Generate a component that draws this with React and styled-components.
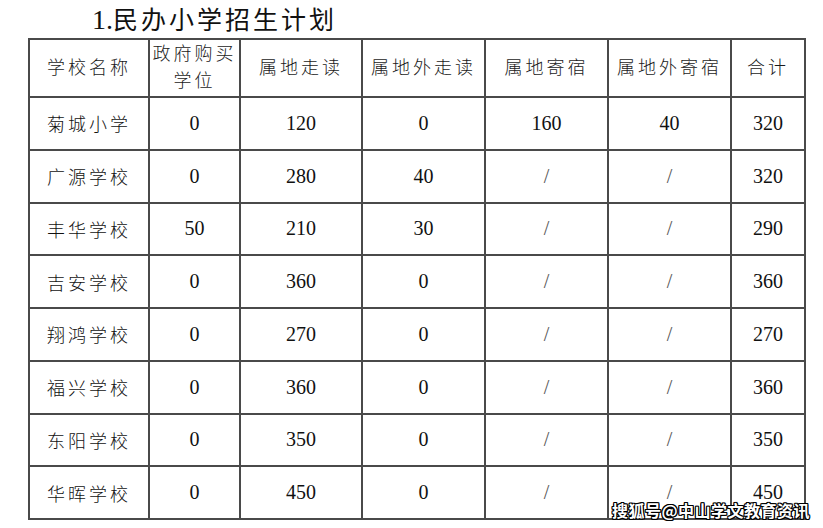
import React from 'react';
import styled, { createGlobalStyle } from 'styled-components';

const GlobalStyle = createGlobalStyle`
    html, body {
        margin: 0;
        padding: 0;
        background: #fff;
    }
`

const Page = styled.div`
    position: relative;
    width: 823px;
    height: 528px;
    overflow: hidden;
    background: #fff;
    color: #111;
    font-family: "Liberation Serif", "Noto Sans CJK SC", serif;
`

const Title = styled.h1`
    margin: 0;
    height: 38px;
    padding-left: 92px;
    padding-top: 2px;
    box-sizing: border-box;
    display: flex;
    align-items: center;
    font-weight: 400;
    font-size: 25px;
    letter-spacing: 3px;
    line-height: 1;
    color: #111;
`

const Num = styled.span`
    font-size: 28px;
    letter-spacing: 0;
`

const Table = styled.table`
    margin-left: 28px;
    width: 776px;
    border-collapse: collapse;
    table-layout: fixed;
    border: 2px solid #5c5c5c;
`

const Th = styled.th`
    height: 56px;
    padding: 0;
    border: 2px solid #4a4a4a;
    font-weight: 300;
    font-size: 18px;
    letter-spacing: 3px;
    line-height: 27px;
    text-align: center;
    color: #1a1a1a;
`

const Td = styled.td`
    height: 50.75px;
    padding: 0;
    border: 2px solid #4a4a4a;
    text-align: center;
    font-size: ${p => (p.$name ? '18px' : '20px')};
    font-weight: ${p => (p.$name ? 300 : 400)};
    letter-spacing: ${p => (p.$name ? '3px' : '0')};
    color: ${p => (p.$empty ? '#555' : '#111')};
`

const Next = styled.p`
    margin: 9px 0 0 115px;
    font-size: 22px;
    letter-spacing: 3px;
    font-weight: 300;
    line-height: 1;
    white-space: nowrap;
`

const Watermark = styled.div`
    position: absolute;
    left: 612px;
    top: 500px;
    font-family: "Noto Sans CJK SC", sans-serif;
    font-weight: 700;
    font-size: 16px;
    letter-spacing: 0.5px;
    line-height: 20px;
    color: #fff;
    text-shadow: -1px -1px 0 #000, 1px -1px 0 #000, -1px 1px 0 #000, 1px 1px 0 #000, 0 1px 0 #000, 1px 0 0 #000, 0 -1px 0 #000, -1px 0 0 #000;
`

const widths = [120, 91, 122, 123, 123, 123, 74];

const rows = [
    ['菊城小学', '0', '120', '0', '160', '40', '320'],
    ['广源学校', '0', '280', '40', '/', '/', '320'],
    ['丰华学校', '50', '210', '30', '/', '/', '290'],
    ['吉安学校', '0', '360', '0', '/', '/', '360'],
    ['翔鸿学校', '0', '270', '0', '/', '/', '270'],
    ['福兴学校', '0', '360', '0', '/', '/', '360'],
    ['东阳学校', '0', '350', '0', '/', '/', '350'],
    ['华晖学校', '0', '450', '0', '/', '/', '450'],
]

const App = () => {
    return (
        <Page>
            <GlobalStyle />
            <Title><Num>1.</Num>民办小学招生计划</Title>
            <Table>
                <colgroup>
                    {widths.map((w, i) => <col key={i} style={{width: w}} />)}
                </colgroup>
                <thead>
                    <tr>
                        <Th>学校名称</Th>
                        <Th>政府购买<br />学位</Th>
                        <Th>属地走读</Th>
                        <Th>属地外走读</Th>
                        <Th>属地寄宿</Th>
                        <Th>属地外寄宿</Th>
                        <Th>合计</Th>
                    </tr>
                </thead>
                <tbody>
                    {rows.map((r) => (
                        <tr key={r[0]}>
                            {r.map((c, i) => (
                                <Td key={i} $name={i === 0} $empty={c === '/'}>{c}</Td>
                            ))}
                        </tr>
                    ))}
                </tbody>
            </Table>
            <Next>2.民办初中招生计划</Next>
            <Watermark>搜狐号@中山学文教育资讯</Watermark>
        </Page>
    )
}

export default App
